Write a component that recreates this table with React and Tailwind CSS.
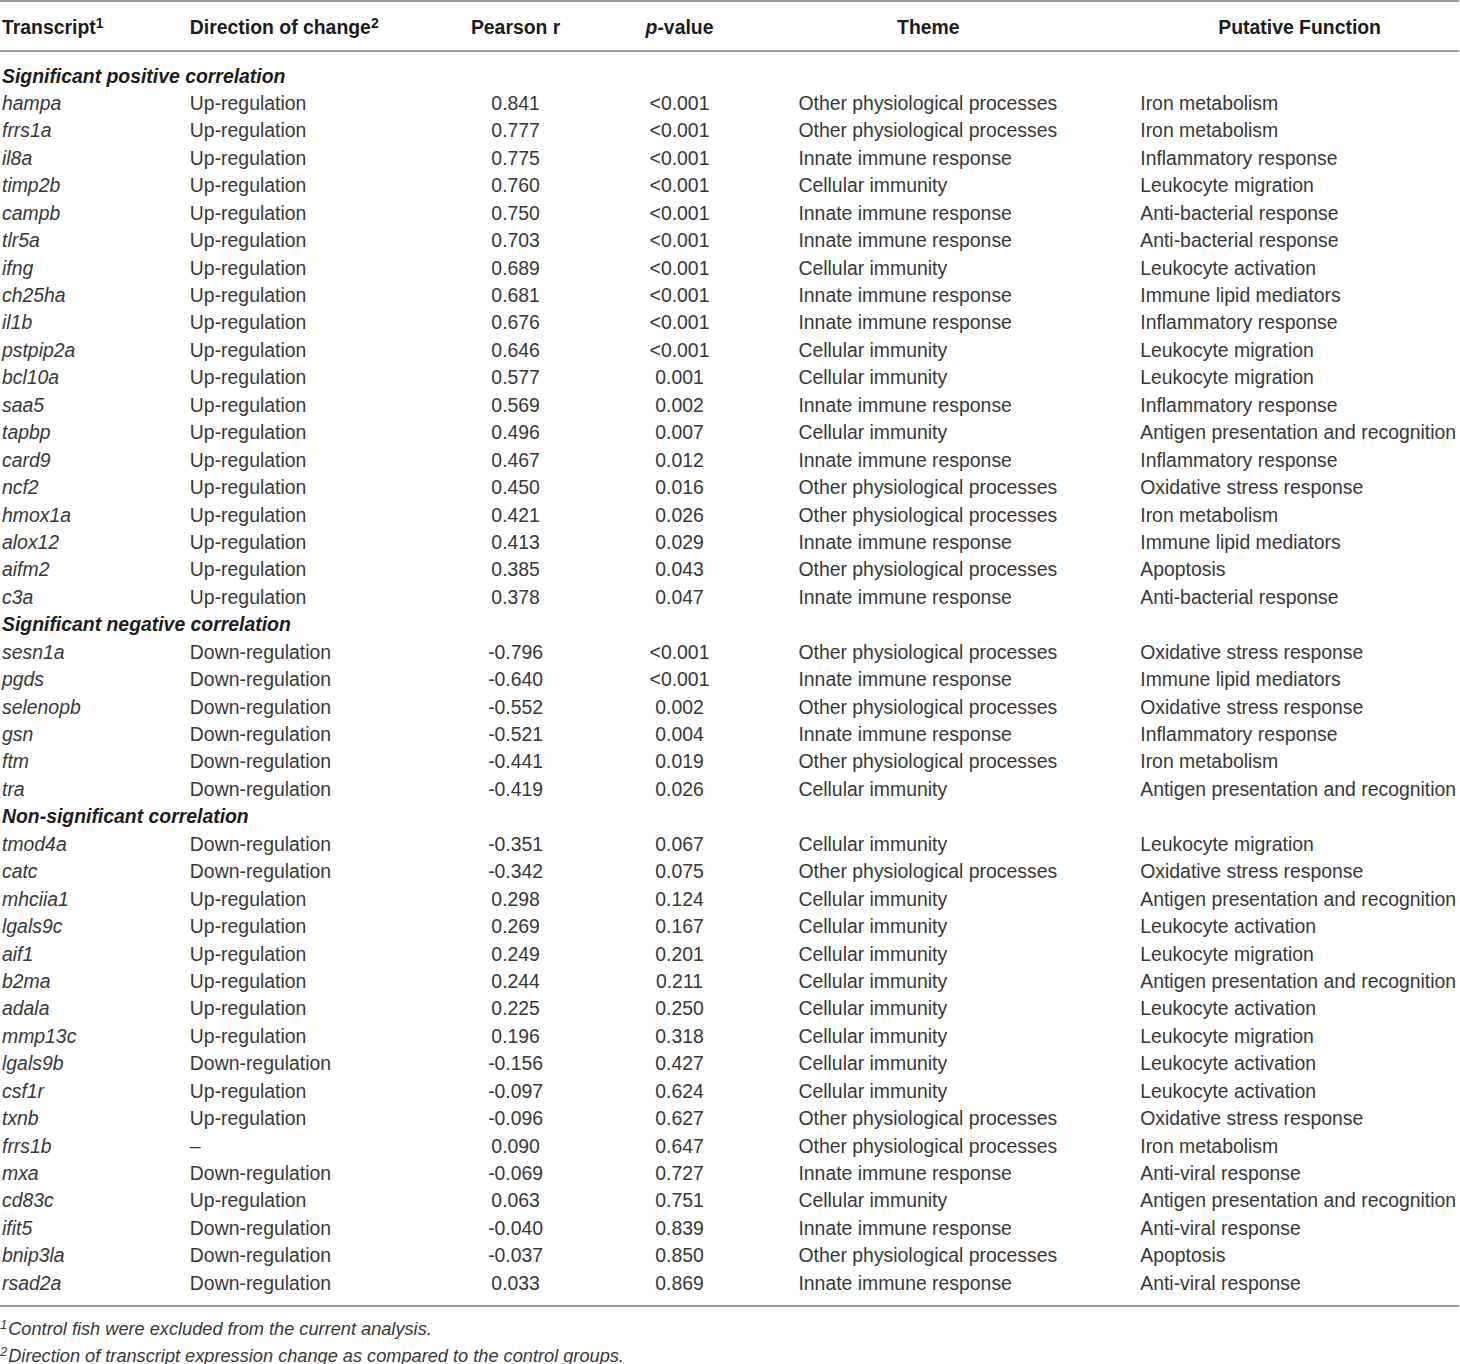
const sections = [
  {
    title: "Significant positive correlation",
    rows: [
      ["hampa", "Up-regulation", "0.841", "<0.001", "Other physiological processes", "Iron metabolism"],
      ["frrs1a", "Up-regulation", "0.777", "<0.001", "Other physiological processes", "Iron metabolism"],
      ["il8a", "Up-regulation", "0.775", "<0.001", "Innate immune response", "Inflammatory response"],
      ["timp2b", "Up-regulation", "0.760", "<0.001", "Cellular immunity", "Leukocyte migration"],
      ["campb", "Up-regulation", "0.750", "<0.001", "Innate immune response", "Anti-bacterial response"],
      ["tlr5a", "Up-regulation", "0.703", "<0.001", "Innate immune response", "Anti-bacterial response"],
      ["ifng", "Up-regulation", "0.689", "<0.001", "Cellular immunity", "Leukocyte activation"],
      ["ch25ha", "Up-regulation", "0.681", "<0.001", "Innate immune response", "Immune lipid mediators"],
      ["il1b", "Up-regulation", "0.676", "<0.001", "Innate immune response", "Inflammatory response"],
      ["pstpip2a", "Up-regulation", "0.646", "<0.001", "Cellular immunity", "Leukocyte migration"],
      ["bcl10a", "Up-regulation", "0.577", "0.001", "Cellular immunity", "Leukocyte migration"],
      ["saa5", "Up-regulation", "0.569", "0.002", "Innate immune response", "Inflammatory response"],
      ["tapbp", "Up-regulation", "0.496", "0.007", "Cellular immunity", "Antigen presentation and recognition"],
      ["card9", "Up-regulation", "0.467", "0.012", "Innate immune response", "Inflammatory response"],
      ["ncf2", "Up-regulation", "0.450", "0.016", "Other physiological processes", "Oxidative stress response"],
      ["hmox1a", "Up-regulation", "0.421", "0.026", "Other physiological processes", "Iron metabolism"],
      ["alox12", "Up-regulation", "0.413", "0.029", "Innate immune response", "Immune lipid mediators"],
      ["aifm2", "Up-regulation", "0.385", "0.043", "Other physiological processes", "Apoptosis"],
      ["c3a", "Up-regulation", "0.378", "0.047", "Innate immune response", "Anti-bacterial response"],
    ],
  },
  {
    title: "Significant negative correlation",
    rows: [
      ["sesn1a", "Down-regulation", "-0.796", "<0.001", "Other physiological processes", "Oxidative stress response"],
      ["pgds", "Down-regulation", "-0.640", "<0.001", "Innate immune response", "Immune lipid mediators"],
      ["selenopb", "Down-regulation", "-0.552", "0.002", "Other physiological processes", "Oxidative stress response"],
      ["gsn", "Down-regulation", "-0.521", "0.004", "Innate immune response", "Inflammatory response"],
      ["ftm", "Down-regulation", "-0.441", "0.019", "Other physiological processes", "Iron metabolism"],
      ["tra", "Down-regulation", "-0.419", "0.026", "Cellular immunity", "Antigen presentation and recognition"],
    ],
  },
  {
    title: "Non-significant correlation",
    rows: [
      ["tmod4a", "Down-regulation", "-0.351", "0.067", "Cellular immunity", "Leukocyte migration"],
      ["catc", "Down-regulation", "-0.342", "0.075", "Other physiological processes", "Oxidative stress response"],
      ["mhciia1", "Up-regulation", "0.298", "0.124", "Cellular immunity", "Antigen presentation and recognition"],
      ["lgals9c", "Up-regulation", "0.269", "0.167", "Cellular immunity", "Leukocyte activation"],
      ["aif1", "Up-regulation", "0.249", "0.201", "Cellular immunity", "Leukocyte migration"],
      ["b2ma", "Up-regulation", "0.244", "0.211", "Cellular immunity", "Antigen presentation and recognition"],
      ["adala", "Up-regulation", "0.225", "0.250", "Cellular immunity", "Leukocyte activation"],
      ["mmp13c", "Up-regulation", "0.196", "0.318", "Cellular immunity", "Leukocyte migration"],
      ["lgals9b", "Down-regulation", "-0.156", "0.427", "Cellular immunity", "Leukocyte activation"],
      ["csf1r", "Up-regulation", "-0.097", "0.624", "Cellular immunity", "Leukocyte activation"],
      ["txnb", "Up-regulation", "-0.096", "0.627", "Other physiological processes", "Oxidative stress response"],
      ["frrs1b", "–", "0.090", "0.647", "Other physiological processes", "Iron metabolism"],
      ["mxa", "Down-regulation", "-0.069", "0.727", "Innate immune response", "Anti-viral response"],
      ["cd83c", "Up-regulation", "0.063", "0.751", "Cellular immunity", "Antigen presentation and recognition"],
      ["ifit5", "Down-regulation", "-0.040", "0.839", "Innate immune response", "Anti-viral response"],
      ["bnip3la", "Down-regulation", "-0.037", "0.850", "Other physiological processes", "Apoptosis"],
      ["rsad2a", "Down-regulation", "0.033", "0.869", "Innate immune response", "Anti-viral response"],
    ],
  },
];

function Row({ row }) {
  const [gene, dir, r, p, theme, fn] = row;
  return (
    <div className="flex h-[27.45px] items-center whitespace-nowrap">
      <div className="w-[190px] pl-[2px] italic">{gene}</div>
      <div className="w-[250px]">{dir}</div>
      <div className="w-[152px] text-center">{r}</div>
      <div className="w-[176px] text-center">{p}</div>
      <div className="w-[291px] pl-[31px]">{theme}</div>
      <div className="w-[401px] pl-[82px]">{fn}</div>
    </div>
  );
}

export default function App() {
  return (
    <div
      className="w-[1460px] bg-white text-[19.4px] leading-none text-[#383838]"
      style={{ fontFamily: '"Liberation Sans", Arial, sans-serif' }}
    >
      <div className="w-[1459px] border-t-2 border-b-2 border-[#9b9b9b]">
        <div className="flex h-[48px] items-center pt-[4px] font-bold text-[#1c1c1c] whitespace-nowrap">
          <div className="w-[190px] pl-[2px]">
            Transcript<span className="text-[14px] align-top relative -top-[2px]">1</span>
          </div>
          <div className="w-[250px]">
            Direction of change<span className="text-[14px] align-top relative -top-[2px]">2</span>
          </div>
          <div className="w-[152px] text-center">Pearson r</div>
          <div className="w-[176px] text-center">
            <span className="italic">p</span>-value
          </div>
          <div className="w-[291px] pl-[31px] text-center">Theme</div>
          <div className="w-[401px] pl-[82px] text-center">Putative Function</div>
        </div>
      </div>

      <div className="w-[1459px] pt-[10.5px] pb-[8px] border-b-2 border-[#9b9b9b]">
        {sections.map((s) => (
          <div key={s.title}>
            <div className="flex h-[27.45px] items-center pl-[2px] font-bold italic text-[#1c1c1c]">
              {s.title}
            </div>
            {s.rows.map((row) => (
              <Row key={row[0]} row={row} />
            ))}
          </div>
        ))}
      </div>

      <div className="pt-[7px] italic text-[18.2px] text-[#383838]">
        <div className="flex h-[27px] items-start pt-[6px]">
          <span className="text-[13px] relative -top-[2px] pr-[1px]">1</span>Control fish were excluded from the current analysis.
        </div>
        <div className="flex h-[27px] items-start pt-[6px]">
          <span className="text-[13px] relative -top-[2px] pr-[1px]">2</span>Direction of transcript expression change as compared to the control groups.
        </div>
      </div>
    </div>
  );
}
